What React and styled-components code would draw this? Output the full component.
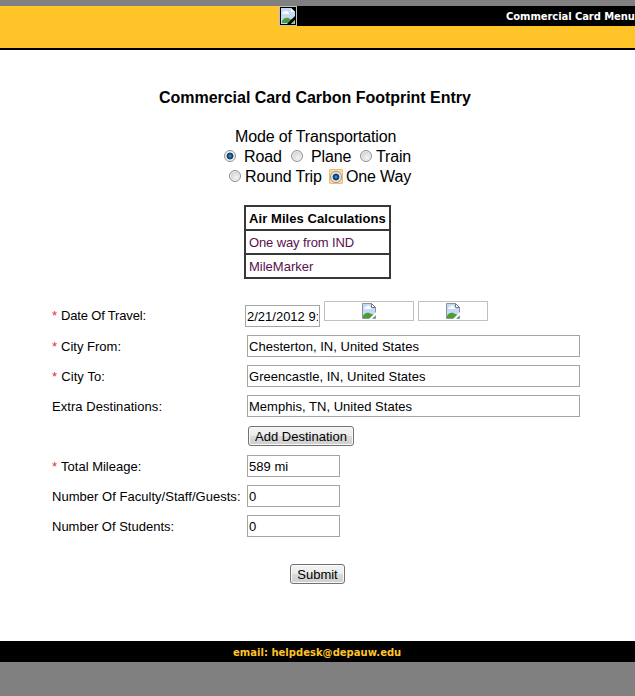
import React from "react";
import styled, { createGlobalStyle } from "styled-components";

const Global = createGlobalStyle`
  * { box-sizing: border-box; }
  body { margin: 0; background: #808080; font-family: "Liberation Sans", Arial, sans-serif; color: #000; }
`;

const Page = styled.div`
  width: 635px;
  height: 696px;
  padding-top: 6px;
  overflow: hidden;
  background: #808080;
`;

const Header = styled.header`
  height: 44px;
  display: flex;
  align-items: flex-start;
  background: #ffc428;
  border-bottom: 2px solid #000;
  padding-left: 279px;
`;

const LogoFrame = styled.div`
  width: 18px;
  height: 20px;
  padding: 1px;
  background: #000;
  border: 1px solid #c0c0c0;
  display: flex;
`;

const MenuBar = styled.nav`
  flex: 1;
  height: 20px;
  background: #000;
  color: #fff;
  font: bold 10px/20px "DejaVu Sans", Verdana, sans-serif;
  letter-spacing: -0.08px;
  padding: 1px 0 0 209px;
  white-space: nowrap;
`;

const Main = styled.main`
  height: 591px;
  background: #fff;
  padding-top: 38px;
  display: flex;
  flex-direction: column;
`;

const Title = styled.h1`
  margin: 0 0 0 159px;
  font-size: 16px;
  line-height: 20px;
  letter-spacing: -0.03px;
  white-space: nowrap;
`;

const Mode = styled.section`
  margin-top: 19px;
  font-size: 16px;
  line-height: 20px;
  letter-spacing: -0.15px;
`;

const ModeHeading = styled.div`
  padding-left: 235px;
`;

const RadioRow = styled.div`
  height: 20px;
  display: flex;
  align-items: center;
  padding-left: ${(p) => p.$indent}px;
`;

const Choice = styled.label`
  width: ${(p) => p.$width}px;
  display: flex;
  align-items: center;
  gap: ${(p) => p.$gap}px;
  white-space: nowrap;
`;

const Radio = styled.span`
  flex: none;
  margin-bottom: 2px;
  width: 12px;
  height: 12px;
  border-radius: 50%;
  border: 1px solid #929292;
  background: ${(p) =>
    p.$on
      ? "radial-gradient(circle at 50% 50%, #5fb0dc 0, #1c5c8c 1.5px, #123c62 3px, #e4eaee 3.8px, #f4f4f4 5px)"
      : "radial-gradient(circle at 60% 65%, #f4f4f4, #cecece 75%, #eee)"};
  box-shadow: ${(p) => (p.$on ? "none" : "inset 0 0 0 1px #f3f3f3")};
`;

const FocusBox = styled.span`
  flex: none;
  width: 14px;
  height: 15px;
  margin-bottom: 1px;
  margin-right: 1px;
  display: flex;
  align-items: center;
  justify-content: center;
  border: 1px solid #eebd72;
  border-radius: 1px;
  background: #fbd9a0;

  ${Radio} { margin-bottom: 0; }
`;

const MilesTable = styled.table`
  margin: 18px 0 0 244px;
  width: 147px;
  border-collapse: collapse;
  border: 2px solid #383838;
  font-size: 13px;
`;

const MilesHead = styled.th`
  height: 24px;
  padding: 0 0 0 3px;
  text-align: left;
  border: 2px solid #383838;
  letter-spacing: 0.08px;
  white-space: nowrap;
`;

const MilesCell = styled.td`
  height: 24px;
  padding: 0 0 0 3px;
  border: 2px solid #383838;
  color: #58104f;
  letter-spacing: ${(p) => p.$spacing || 0}px;
`;

const Form = styled.form`
  margin-top: 21px;
  padding-left: 52px;
  font-size: 13px;
`;

const Row = styled.div`
  height: 30px;
  display: grid;
  grid-template-columns: 195px 1fr;
  align-items: center;
`;

const DateRow = styled(Row)`
  height: 31px;
  grid-template-columns: 193px 1fr;
`;

const Label = styled.label`
  white-space: nowrap;
  letter-spacing: ${(p) => p.$spacing || 0}px;
`;

const Star = styled.span`
  color: #dc3030;
  margin-right: 4px;
`;

const Input = styled.input`
  display: block;
  width: ${(p) => p.$width}px;
  height: 22px;
  padding: 1px 1px 0;
  border: 1px solid #a5a5a5;
  border-radius: 0;
  outline: 0;
  background: #fff;
  color: #000;
  font: 13px "Liberation Sans", Arial, sans-serif;
  letter-spacing: 0.03px;
`;

const DateFields = styled.div`
  height: 31px;
  display: flex;
  align-items: flex-start;
`;

const DateInput = styled(Input)`
  margin-top: 5px;
  letter-spacing: 0;
`;

const ImageButton = styled.span`
  display: flex;
  justify-content: center;
  align-items: center;
  width: ${(p) => p.$width}px;
  height: 20px;
  margin: 1px 0 0 4px;
  border: 1px solid #c0c0c0;
`;

const Button = styled.button`
  width: ${(p) => p.$width}px;
  height: 20px;
  margin-left: ${(p) => p.$left}px;
  padding: 0;
  border: 1px solid #727272;
  border-radius: 3px;
  background: linear-gradient(#f4f4f4, #ebebeb 48%, #dadada 52%, #cfcfcf);
  box-shadow: inset 0 0 0 1px #f8f8f8;
  color: #000;
  font: 13px/17px "Liberation Sans", Arial, sans-serif;
  white-space: nowrap;
`;

const SubmitArea = styled.div`
  display: flex;
  margin-top: 23px;
`;

const Footer = styled.footer`
  height: 21px;
  padding: 1px 0 0 233px;
  background: #000;
  color: #ffc428;
  font: bold 10px/21px "DejaVu Sans", Verdana, sans-serif;
  letter-spacing: 0.02px;
  white-space: nowrap;
`;

function MissingImage() {
  return (
    <svg width="14" height="16" viewBox="0 0 14 16" aria-hidden="true">
      <path d="M.5.5h9l4 4v11H.5z" fill="#c5d8f4" stroke="#8d949c" />
      <path d="M2 6c0-2 2-2 3-3 2-1 3 0 3 1 2 0 2 2 1 2z" fill="#f7fbff" />
      <path d="M1 15v-2c2-4 6-4 8-2l4 1v3z" fill="#4d9c36" />
      <path d="M9.5.5v4h4z" fill="#fff" stroke="#737a82" />
      <path d="M14 9v3l-4 4H7z" fill="#fff" />
    </svg>
  );
}

function LogoImage() {
  return (
    <svg width="14" height="16" viewBox="0 0 14 16" aria-hidden="true">
      <path d="M0 0h10l4 4v12H0z" fill="#c5d8f4" />
      <path d="M1 6c0-2 2-3 4-3s3 1 3 3z" fill="#f7fbff" />
      <path d="M1 15v-2c2-4 6-4 8-2l5 1v3z" fill="#4d9c36" />
      <path d="M10 0v4h4z" fill="#fff" />
      <path d="M14 8v4l-4 4H6z" fill="#000" />
      <path d="M14 12v4h-4z" fill="#a8c0a0" />
    </svg>
  );
}

function Field({ label, required, value, width, spacing }) {
  return (
    <Row>
      <Label $spacing={spacing}>{required && <Star>*</Star>}{label}</Label>
      <Input $width={width} defaultValue={value} />
    </Row>
  );
}

export default function App() {
  return (
    <>
      <Global />
      <Page>
        <Header>
          <LogoFrame><LogoImage /></LogoFrame>
          <MenuBar>Commercial Card Menu</MenuBar>
        </Header>
        <Main>
          <Title>Commercial Card Carbon Footprint Entry</Title>
          <Mode>
            <ModeHeading>Mode of Transportation</ModeHeading>
            <RadioRow $indent={224}>
              <Choice $width={67} $gap={8}><Radio $on />Road</Choice>
              <Choice $width={69} $gap={8}><Radio />Plane</Choice>
              <Choice $width={55} $gap={4}><Radio />Train</Choice>
            </RadioRow>
            <RadioRow $indent={229}>
              <Choice $width={100} $gap={4}><Radio />Round Trip</Choice>
              <Choice $width={90} $gap={2}><FocusBox><Radio $on /></FocusBox>One Way</Choice>
            </RadioRow>
          </Mode>
          <MilesTable>
            <thead><tr><MilesHead>Air Miles Calculations</MilesHead></tr></thead>
            <tbody>
              <tr><MilesCell $spacing={-0.12}>One way from IND</MilesCell></tr>
              <tr><MilesCell>MileMarker</MilesCell></tr>
            </tbody>
          </MilesTable>
          <Form onSubmit={(e) => e.preventDefault()}>
            <DateRow>
              <Label $spacing={-0.16}><Star>*</Star>Date Of Travel:</Label>
              <DateFields>
                <DateInput $width={75} defaultValue="2/21/2012 9:" />
                <ImageButton $width={90}><MissingImage /></ImageButton>
                <ImageButton $width={70}><MissingImage /></ImageButton>
              </DateFields>
            </DateRow>
            <Field label="City From:" required value="Chesterton, IN, United States" width={333} />
            <Field label="City To:" required value="Greencastle, IN, United States" width={333} spacing={0.1} />
            <Field label="Extra Destinations:" value="Memphis, TN, United States" width={333} spacing={0.05} />
            <Row><span /><Button type="button" $width={106} $left={1}>Add Destination</Button></Row>
            <Field label="Total Mileage:" required value="589 mi" width={93} />
            <Field label="Number Of Faculty/Staff/Guests:" value="0" width={93} spacing={0.03} />
            <Field label="Number Of Students:" value="0" width={93} />
            <SubmitArea><Button type="submit" $width={55} $left={238}>Submit</Button></SubmitArea>
          </Form>
        </Main>
        <Footer>email: helpdesk@depauw.edu</Footer>
      </Page>
    </>
  );
}
